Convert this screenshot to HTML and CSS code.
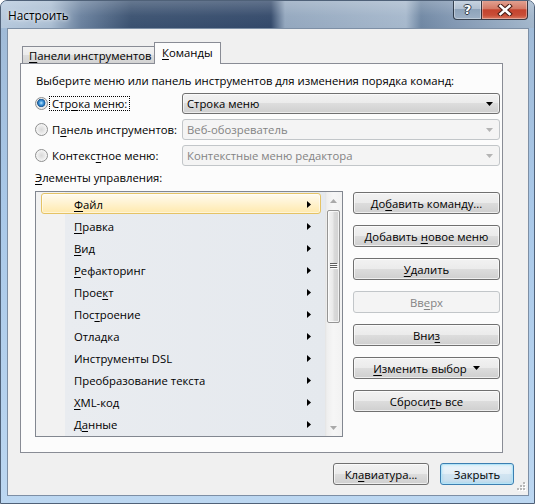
FILE: index.html
```html
<!DOCTYPE html>
<html lang="ru">
<head>
<meta charset="utf-8">
<title>Настроить</title>
<link rel="stylesheet" href="styles.css">
</head>
<body>
<div class="window">
  <div class="titlebar">
    <div class="title">Настроить</div>
    <div class="caption-buttons">
      <div class="cap-btn cap-help"><span class="help-glyph">?</span></div>
      <div class="cap-btn cap-close">
        <svg width="16" height="12" viewBox="0 0 16 12"><path d="M3.5 2 L12.5 10 M12.5 2 L3.5 10" stroke="#4a1f18" stroke-width="4.6" stroke-linecap="square" fill="none"/><path d="M3.5 2 L12.5 10 M12.5 2 L3.5 10" stroke="#ffffff" stroke-width="2.6" stroke-linecap="square" fill="none"/></svg>
      </div>
    </div>
  </div>
  <div class="client">
    <div class="tabs">
      <div class="tab tab-inactive"><span><u>П</u>анели инструментов</span></div>
      <div class="tab tab-active"><span><u>К</u>оманды</span></div>
    </div>
    <div class="panel">
      <div class="intro">Выберите меню или панель инструментов для изменения порядка команд:</div>
      <div class="choices">
        <div class="choice">
          <div class="radio-label"><span class="radio checked"></span><span class="label-text focus">Стр<u>о</u>ка меню:</span></div>
          <div class="combo">
            <span class="combo-text">Строка меню</span>
            <svg class="combo-arrow" width="7" height="4" viewBox="0 0 7 4"><path d="M0 0 H7 L3.5 4 Z" fill="#000"/></svg>
          </div>
        </div>
        <div class="choice">
          <div class="radio-label"><span class="radio"></span><span class="label-text">П<u>а</u>нель инструментов:</span></div>
          <div class="combo disabled">
            <span class="combo-text">Веб-обозреватель</span>
            <svg class="combo-arrow" width="7" height="4" viewBox="0 0 7 4"><path d="M0 0 H7 L3.5 4 Z" fill="#b4b4b4"/></svg>
          </div>
        </div>
        <div class="choice">
          <div class="radio-label"><span class="radio"></span><span class="label-text">Контекс<u>т</u>ное меню:</span></div>
          <div class="combo disabled">
            <span class="combo-text">Контекстные меню редактора</span>
            <svg class="combo-arrow" width="7" height="4" viewBox="0 0 7 4"><path d="M0 0 H7 L3.5 4 Z" fill="#b4b4b4"/></svg>
          </div>
        </div>
      </div>
      <div class="controls-label"><u>Э</u>лементы управления:</div>
      <div class="controls">
        <div class="listbox">
          <div class="items">
            <div class="item hot"><span class="name"><u>Ф</u>айл</span><svg class="sub" width="4" height="7" viewBox="0 0 4 7"><path d="M0 0 L4 3.5 L0 7 Z" fill="#000"/></svg></div>
            <div class="item"><span class="name"><u>П</u>равка</span><svg class="sub" width="4" height="7" viewBox="0 0 4 7"><path d="M0 0 L4 3.5 L0 7 Z" fill="#000"/></svg></div>
            <div class="item"><span class="name"><u>В</u>ид</span><svg class="sub" width="4" height="7" viewBox="0 0 4 7"><path d="M0 0 L4 3.5 L0 7 Z" fill="#000"/></svg></div>
            <div class="item"><span class="name"><u>Р</u>ефакторинг</span><svg class="sub" width="4" height="7" viewBox="0 0 4 7"><path d="M0 0 L4 3.5 L0 7 Z" fill="#000"/></svg></div>
            <div class="item"><span class="name">Прое<u>к</u>т</span><svg class="sub" width="4" height="7" viewBox="0 0 4 7"><path d="M0 0 L4 3.5 L0 7 Z" fill="#000"/></svg></div>
            <div class="item"><span class="name">Пос<u>т</u>роение</span><svg class="sub" width="4" height="7" viewBox="0 0 4 7"><path d="M0 0 L4 3.5 L0 7 Z" fill="#000"/></svg></div>
            <div class="item"><span class="name">Отладка</span><svg class="sub" width="4" height="7" viewBox="0 0 4 7"><path d="M0 0 L4 3.5 L0 7 Z" fill="#000"/></svg></div>
            <div class="item"><span class="name">Инструменты DSL</span><svg class="sub" width="4" height="7" viewBox="0 0 4 7"><path d="M0 0 L4 3.5 L0 7 Z" fill="#000"/></svg></div>
            <div class="item"><span class="name">Преобразование текста</span><svg class="sub" width="4" height="7" viewBox="0 0 4 7"><path d="M0 0 L4 3.5 L0 7 Z" fill="#000"/></svg></div>
            <div class="item"><span class="name"><u>X</u>ML-код</span><svg class="sub" width="4" height="7" viewBox="0 0 4 7"><path d="M0 0 L4 3.5 L0 7 Z" fill="#000"/></svg></div>
            <div class="item"><span class="name">Д<u>а</u>нные</span><svg class="sub" width="4" height="7" viewBox="0 0 4 7"><path d="M0 0 L4 3.5 L0 7 Z" fill="#000"/></svg></div>
          </div>
          <div class="scrollbar">
            <div class="sb-arrow"><svg width="7" height="4" viewBox="0 0 7 4"><path d="M0 4 H7 L3.5 0 Z" fill="#a9a9a9"/></svg></div>
            <div class="thumb">
              <svg width="8" height="7" viewBox="0 0 8 7"><path d="M0 0.5 H7 M0 2.5 H7 M0 4.5 H7" stroke="#5e5e5e" stroke-width="1"/><path d="M1 1.5 H8 M1 3.5 H8 M1 5.5 H8" stroke="#ffffff" stroke-width="1"/></svg>
            </div>
            <div class="sb-track"></div>
            <div class="sb-arrow"><svg width="7" height="4" viewBox="0 0 7 4"><path d="M0 0 H7 L3.5 4 Z" fill="#a9a9a9"/></svg></div>
          </div>
        </div>
        <div class="buttons">
          <div class="btn"><span>До<u>б</u>авить команду...</span></div>
          <div class="btn"><span>Добавить <u>н</u>овое меню</span></div>
          <div class="btn"><span><u>У</u>далить</span></div>
          <div class="btn disabled"><span>Вв<u>е</u>рх</span></div>
          <div class="btn"><span>Вни<u>з</u></span></div>
          <div class="btn"><span><u>И</u>зменить выбор</span><svg class="btn-drop" width="7" height="4" viewBox="0 0 7 4"><path d="M0 0 H7 L3.5 4 Z" fill="#000"/></svg></div>
          <div class="btn"><span>Сброси<u>т</u>ь все</span></div>
        </div>
      </div>
    </div>
    <div class="footer">
      <div class="btn btn-keyboard"><span>Кл<u>а</u>виатура...</span></div>
      <div class="btn btn-close default"><span>Закрыть</span></div>
    </div>
    <svg class="grip" width="11" height="11" viewBox="0 0 11 11">
      <g fill="#ffffff"><rect x="9" y="1" width="2" height="2"/><rect x="6" y="4" width="2" height="2"/><rect x="9" y="4" width="2" height="2"/><rect x="3" y="7" width="2" height="2"/><rect x="6" y="7" width="2" height="2"/><rect x="9" y="7" width="2" height="2"/></g>
      <g fill="#b8b8b8"><rect x="8" y="0" width="2" height="2"/><rect x="5" y="3" width="2" height="2"/><rect x="8" y="3" width="2" height="2"/><rect x="2" y="6" width="2" height="2"/><rect x="5" y="6" width="2" height="2"/><rect x="8" y="6" width="2" height="2"/></g>
    </svg>
  </div>
</div>
</body>
</html>
```

FILE: styles.css
```css
* { box-sizing: border-box; }
html, body { margin: 0; padding: 0; }
body {
  width: 535px;
  height: 504px;
  overflow: hidden;
  font-family: "Open Sans", "Noto Sans", sans-serif;
  font-size: 11.3px;
  color: #000;
  background: #ffffff;
}
u { text-decoration: underline; text-underline-offset: 2px; text-decoration-thickness: 1px; }

.window {
  width: 535px;
  height: 504px;
  display: flex;
  flex-direction: column;
  border: 1px solid #4f6178;
  border-radius: 7px 7px 0 0;
  overflow: hidden;
  background: linear-gradient(180deg, #9fb9d5 0%, #a9c8e8 40%, #bcd7f1 100%);
  position: relative;
}

.titlebar {
  height: 27px;
  flex: none;
  display: flex;
  align-items: center;
  background:
    linear-gradient(180deg, rgba(255,255,255,0.22) 0%, rgba(255,255,255,0.04) 55%, rgba(255,255,255,0) 100%),
    linear-gradient(90deg, #b6c9dd 0px, #aabdd2 50px, #6a819e 80px, #3a5170 130px, #33496a 270px, #93a7be 284px, #a6b8cc 405px, #6f87a3 420px, #8096b1 450px, #a3b7cc 534px);
}
.title {
  padding-left: 7px;
  font-size: 11.8px;
  color: #000;
  text-shadow: 0 0 6px rgba(255,255,255,0.9), 0 0 3px rgba(255,255,255,0.7);
}
.caption-buttons {
  margin-left: auto;
  margin-right: 6px;
  align-self: flex-start;
  display: flex;
  margin-top: -1px;
}
.cap-btn {
  height: 20px;
  display: flex;
  align-items: center;
  justify-content: center;
  border: 1px solid rgba(30,40,55,0.85);
  border-top: 0;
  box-shadow: inset 0 0 0 1px rgba(255,255,255,0.35);
}
.cap-help {
  width: 28px;
  border-right: 0;
  border-radius: 0 0 0 4px;
  background: linear-gradient(180deg, #c9d5e2 0%, #b2c1d2 45%, #8ea3ba 50%, #9db0c5 100%);
}
.help-glyph {
  font-family: "DejaVu Sans", sans-serif;
  font-weight: bold;
  font-size: 13px;
  color: #fff;
  line-height: 1;
  text-shadow: 1px 0 0 #2e3a48, -1px 0 0 #2e3a48, 0 1px 0 #2e3a48, 0 -1px 0 #2e3a48;
}
.cap-close {
  width: 47px;
  border-radius: 0 0 4px 0;
  background: linear-gradient(180deg, #e3a595 0%, #d47a66 45%, #c4432e 52%, #c84d37 80%, #d97a62 100%);
}

.client {
  flex: 1;
  margin: 0 5px 7px 6px;
  border: 1px solid #7d8fa5;
  background: #f0f0f0;
  display: flex;
  flex-direction: column;
  padding-top: 13px;
  position: relative;
}

.tabs {
  display: flex;
  align-items: flex-end;
  height: 21px;
  margin-left: 12px;
  padding-left: 2px;
  position: relative;
  z-index: 1;
}
.tab {
  display: flex;
  align-items: center;
  border: 1px solid #898c95;
  border-bottom: 0;
  white-space: nowrap;
}
.tab-inactive {
  width: 133px;
  height: 17px;
  padding-left: 6px;
  background: linear-gradient(180deg, #f2f2f2 0%, #ebebeb 50%, #dddddd 51%, #d3d3d3 100%);
}
.tab-active {
  width: 67px;
  height: 22px;
  margin-left: -1px;
  margin-bottom: -1px;
  padding-left: 7px;
  padding-bottom: 2px;
  background: #fcfcfc;
}

.panel {
  margin-left: 12px;
  width: 483px;
  height: 390px;
  border: 1px solid #898c95;
  background: #fcfcfc;
  padding: 9px 2px 0 14px;
  display: flex;
  flex-direction: column;
}
.intro { line-height: 16px; height: 16px; padding-left: 1px; white-space: nowrap; }
.choices {
  margin-top: 4px;
  display: flex;
  flex-direction: column;
  gap: 5px;
}
.choice {
  display: flex;
  align-items: center;
  height: 21px;
}
.radio-label {
  width: 147px;
  display: flex;
  align-items: center;
  white-space: nowrap;
}
.radio {
  width: 13px;
  height: 13px;
  border-radius: 50%;
  border: 1px solid #8e8f8f;
  margin-right: 1px;
  flex: none;
  background: radial-gradient(circle at 50% 50%, #d9d9d9 0, #e8e8e8 3px, #f6f6f6 5.5px, #fdfdfd 100%);
}
.radio.checked {
  background: radial-gradient(circle at 48% 45%, #c2e8fd 0, #56a8e4 1.6px, #1f6cb4 3.3px, #2b5f8f 3.9px, #e6e6e6 4.4px, #f7f7f7 100%);
}
.label-text {
  padding: 0 2px;
  line-height: 13px;
  border: 1px solid transparent;
}
.label-text.focus { border: 1px dotted #000; }

.combo {
  width: 318px;
  height: 21px;
  display: flex;
  align-items: center;
  padding: 0 6px 0 4px;
  border: 1px solid #707070;
  border-radius: 3px;
  background: linear-gradient(180deg, #f2f2f2 0%, #ebebeb 49%, #dddddd 50%, #cfcfcf 100%);
  box-shadow: inset 0 0 0 1px rgba(255,255,255,0.6);
}
.combo-text { flex: 1; white-space: nowrap; }
.combo.disabled {
  border-color: #c2c6c9;
  background: #f4f4f4;
  box-shadow: none;
  color: #838383;
}

.controls-label { margin-top: 4px; line-height: 16px; height: 16px; }
.controls {
  margin-top: 5px;
  display: flex;
  gap: 10px;
}
.listbox {
  width: 308px;
  height: 246px;
  border: 1px solid #828790;
  display: flex;
}
.items {
  flex: 1;
  padding-top: 1px;
  background: linear-gradient(90deg, #f2f2f2 0, #f2f2f2 29px, #e9ecf0 29px, #e5e9ee 100%);
}
.item {
  height: 21px;
  margin: 0 4px 1px 5px;
  border: 1px solid transparent;
  border-radius: 3px;
  display: flex;
  align-items: center;
  padding: 1px 9px 0 32px;
  white-space: nowrap;
}
.item .name { flex: 1; }
.item.hot {
  border-color: #e5c365;
  background: linear-gradient(180deg, #fffbef 0%, #fff3d2 45%, #ffe9ad 100%);
  box-shadow: inset 0 0 0 1px rgba(255,255,255,0.5);
}

.scrollbar {
  width: 17px;
  flex: none;
  display: flex;
  flex-direction: column;
  background: linear-gradient(90deg, #e3e3e3 0, #efefef 2px, #f6f6f6 50%, #f2f2f2 100%);
}
.sb-arrow {
  height: 17px;
  display: flex;
  align-items: center;
  justify-content: center;
  flex: none;
}
.thumb {
  margin: 1px 2px 0 2px;
  height: 113px;
  border: 1px solid #959595;
  border-radius: 2px;
  background: linear-gradient(90deg, #f4f4f4 0%, #e9e9e9 45%, #dadada 55%, #d2d2d2 100%);
  box-shadow: inset 0 0 0 1px rgba(255,255,255,0.7);
  display: flex;
  align-items: center;
  justify-content: center;
  flex: none;
}
.sb-track { flex: 1; }

.buttons {
  width: 147px;
  display: flex;
  flex-direction: column;
  gap: 11px;
  padding-top: 1px;
}
.btn {
  height: 22px;
  display: flex;
  align-items: center;
  justify-content: center;
  border: 1px solid #707070;
  border-radius: 3px;
  background: linear-gradient(180deg, #f2f2f2 0%, #ebebeb 49%, #dddddd 50%, #cfcfcf 100%);
  box-shadow: inset 0 0 0 1px rgba(255,255,255,0.65);
  white-space: nowrap;
}
.btn.disabled {
  border-color: #c2c6c9;
  background: #f4f4f4;
  box-shadow: none;
  color: #838383;
}
.btn-drop { margin-left: 6px; }

.footer {
  margin-top: 10px;
  display: flex;
  justify-content: flex-end;
  gap: 11px;
  padding-right: 14px;
}
.btn-keyboard { width: 96px; }
.btn-close { width: 74px; }
.btn.default {
  border-color: #3c7fb1;
  background: linear-gradient(180deg, #eef6fb 0%, #e3eff7 49%, #d2e5f2 50%, #c6dded 100%);
  box-shadow: inset 0 0 0 1px #b4e4f8, inset 0 0 3px 1px rgba(90,200,240,0.35);
}
.grip {
  position: absolute;
  right: 2px;
  bottom: 2px;
}
```
